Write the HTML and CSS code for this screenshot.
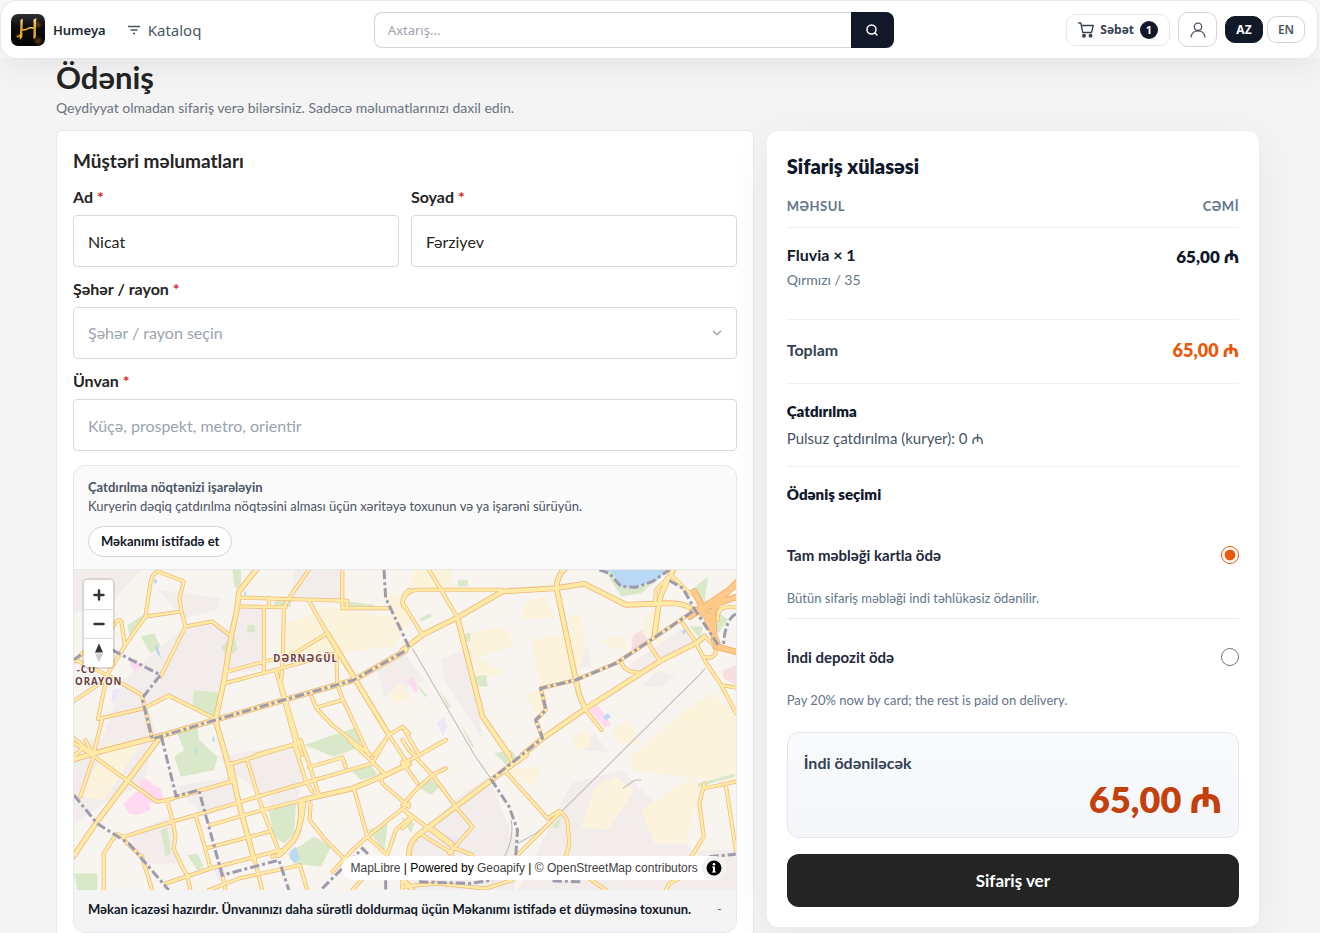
FILE: index.html
```html
<!DOCTYPE html>
<html lang="az">
<head>
<meta charset="utf-8">
<meta name="viewport" content="width=device-width, initial-scale=1">
<title>Ödəniş – Humeya</title>
<link rel="stylesheet" href="styles.css">
</head>
<body>
<div class="topbar">
  <header class="header">
    <div class="header-start">
      <a class="brand" href="#">
        <svg class="brand-logo" viewBox="0 0 34 34" aria-hidden="true">
          <defs>
            <linearGradient id="gold" x1="0" y1="0" x2="0" y2="1"><stop offset="0" stop-color="#fbe27a"/><stop offset=".5" stop-color="#d99a1c"/><stop offset="1" stop-color="#f8c53a"/></linearGradient>
            <linearGradient id="night" x1="0" y1="0" x2="0" y2="1"><stop offset="0" stop-color="#2e3036"/><stop offset=".4" stop-color="#0d0d10"/><stop offset="1" stop-color="#050505"/></linearGradient>
            <radialGradient id="ember"><stop offset="0" stop-color="#a05c10" stop-opacity=".6"/><stop offset="1" stop-color="#a05c10" stop-opacity="0"/></radialGradient>
          </defs>
          <rect y="1" width="34" height="32" rx="7" fill="url(#night)"/>
          <circle cx="27" cy="28" r="5" fill="url(#ember)"/>
          <circle cx="27" cy="12" r="4" fill="url(#ember)"/>
          <circle cx="7" cy="23" r="3" fill="url(#ember)"/>
          <path d="M9.500 7l2.300-1.500-.5 18.500-2.500 3z" fill="url(#gold)"/>
          <path d="M22.500 6.500l2.800-1.500-.5 19-2.300 2.500z" fill="url(#gold)"/>
          <path d="M5.500 23.500l3.500-2v2L6.500 24.500z" fill="#d8961c"/>
          <path d="M10.500 16.500q4 1 6.500-1 3-1.500 6.500 0" fill="none" stroke="url(#gold)" stroke-width="1.500"/>
        </svg>
        <span class="brand-name">Humeya</span>
      </a>
      <a class="catalog-link" href="#">
        <svg width="12" height="10" viewBox="0 0 12 10" fill="none" stroke="currentColor" stroke-width="1.300" aria-hidden="true"><path d="M0 1.500h12M2.500 5h7M5 8.500h2"/></svg>
        Kataloq
      </a>
    </div>
    <form class="search" role="search">
      <input class="search-input" type="search" placeholder="Axtarış..." aria-label="Axtarış">
      <button class="search-button" type="button" aria-label="Axtar">
        <svg width="14" height="14" viewBox="0 0 14 14" fill="none" stroke="currentColor" stroke-width="1.500" stroke-linecap="round" aria-hidden="true"><circle cx="6.500" cy="6.500" r="4.500"/><path d="M10 10l2 2"/></svg>
      </button>
    </form>
    <nav class="header-end" aria-label="Hesab">
      <a class="cart" href="#">
        <svg width="16" height="16" viewBox="0 0 16 16" fill="none" stroke="currentColor" stroke-width="1.300" stroke-linecap="round" stroke-linejoin="round" aria-hidden="true"><path d="M.7 1h2.100l2 9.500h8.700L15.300 3.500H3.400"/><circle cx="6" cy="13.800" r="1.300" fill="currentColor"/><circle cx="12.500" cy="13.800" r="1.300" fill="currentColor"/></svg>
        Səbət
        <span class="cart-count">1</span>
      </a>
      <a class="account" href="#" aria-label="Profil">
        <svg width="16" height="16" viewBox="0 0 16 16" fill="none" stroke="currentColor" stroke-width="1.300" stroke-linecap="round" aria-hidden="true"><circle cx="8" cy="4.800" r="3.700"/><path d="M1 14.800c.8-4 3.500-6 7-6s6.200 2 7 6"/></svg>
      </a>
      <div class="languages">
        <button class="language language-active" type="button">AZ</button>
        <button class="language" type="button">EN</button>
      </div>
    </nav>
  </header>
</div>

<main class="page">
  <h1 class="page-title">Ödəniş</h1>
  <p class="page-lead">Qeydiyyat olmadan sifariş verə bilərsiniz. Sadəcə məlumatlarınızı daxil edin.</p>

  <form class="checkout">
    <section class="panel">
      <h2 class="panel-title">Müştəri məlumatları</h2>
      <div class="fields">
        <div class="field">
          <label class="label" for="first-name">Ad <span class="required">*</span></label>
          <input class="control" id="first-name" type="text" value="Nicat">
        </div>
        <div class="field">
          <label class="label" for="last-name">Soyad <span class="required">*</span></label>
          <input class="control" id="last-name" type="text" value="Fərziyev">
        </div>
        <div class="field field-wide">
          <label class="label" for="city">Şəhər / rayon <span class="required">*</span></label>
          <div class="select-wrap">
            <select class="control control-empty" id="city"><option>Şəhər / rayon seçin</option></select>
            <svg class="select-arrow" width="10" height="6" viewBox="0 0 10 6" fill="none" stroke="currentColor" stroke-width="1.300" aria-hidden="true"><path d="M1 .8l4 4 4-4"/></svg>
          </div>
        </div>
        <div class="field field-wide">
          <label class="label" for="address">Ünvan <span class="required">*</span></label>
          <input class="control" id="address" type="text" placeholder="Küçə, prospekt, metro, orientir">
        </div>
      </div>

      <div class="location">
        <div class="location-head">
          <p class="location-title">Çatdırılma nöqtənizi işarələyin</p>
          <p class="location-text">Kuryerin dəqiq çatdırılma nöqtəsini alması üçün xəritəyə toxunun və ya işarəni sürüyün.</p>
          <button class="locate-button" type="button">Məkanımı istifadə et</button>
        </div>
        <div class="map">
          <svg class="map-canvas" viewBox="0 0 1983 960" preserveAspectRatio="xMidYMid slice" role="img" aria-label="Xəritə">
            <defs>
              <g id="roads-minor">
                <g transform="translate(-6 -15)">
                  <path d="M105 330L160 240 220 155 235 55Q240 25 258 20L335 50 322 100 328 140 340 185 265 335M220 155L328 140M340 185L420 170 478 215M120 190Q140 155 148 170L158 240M0 295L35 262M0 280L105 330 210 390M0 412L100 345M78 462L215 430 290 392 430 462M210 392L240 520M78 462L105 330M65 565L90 465M500 98L825 108M505 125L640 127M590 98V125M710 15L650 100 635 130 632 270 626 360M575 127V325M810 15V130L945 130M825 108V130M710 108L765 205M465 320L575 290 660 270 765 205M458 355L620 312 800 262M612 320L635 405 680 570M628 360L645 420 690 570M792 262L795 360 810 400 890 570M718 395L732 430 780 480 895 570M732 428L810 405M905 570L950 510 990 485 1010 505M950 510L1002 590M550 570L675 535M0 515L60 565M5 575L35 545M1010 75Q985 95 992 125"/>
                </g>
                <g transform="translate(984 -15)">
                  <path d="M80 15L165 158M60 210L0 112Q10 75 50 75L300 75M420 520L400 465 430 435 415 370 520 345 640 295 760 215 870 140M805 30L760 75 757 120M810 35L850 75 880 95M740 240L770 285M655 290Q665 322 705 322M840 175L875 225M880 235L905 285 955 360 1000 445M955 360L1000 368M0 485L50 570 130 525M905 215Q940 240 940 262 930 285 905 275M545 430L597 495"/>
                </g>
                <g transform="translate(-6 510)">
                  <path d="M0 5L65 48 25 170M65 48L170 125 255 185 285 180 475 125M65 48L40 0M285 180L302 245 310 290 305 325 330 380 345 405 355 450M155 290L300 245 475 195 555 170 700 128 900 70M165 310Q145 275 130 285L95 340 95 450M165 310L210 350 240 450M370 225L395 310 415 385M415 255L570 210 690 180M400 325L590 275M280 430L415 385 625 330M410 450L500 415 683 375 705 450M475 72L680 10M525 60L560 175 575 220 625 345M665 10L700 120 720 155M685 0L712 75 740 165 690 180M710 82L810 52 820 80M845 145L885 290 945 345M715 190L712 240 760 300 820 360 860 400M830 0L900 65 940 105M925 105L930 130 1010 200M1010 190L885 290 840 330 780 395M945 345L970 270 1010 235M620 345Q690 300 695 190M940 0L900 70M840 450L885 400 950 380M990 400V450M545 350L570 450M450 400L460 450M600 350L630 340"/>
                </g>
                <g transform="translate(984 510)">
                  <path d="M285 0L330 65M310 95L435 235 470 212Q495 230 495 250L500 310 490 350M475 215L345 345M0 195L40 150 90 105 130 85M0 0L20 30 90 105 160 200 210 260 140 340M0 65L45 130M0 72L60 40 130 0M0 205L150 320 210 345M60 285L150 340M90 265L150 310M0 440L100 430 250 445 330 420M0 205L30 235 0 265M905 130L905 145 1000 125M905 130L890 190 903 290 865 350M970 140L1000 335M790 450L800 430 830 415M560 415L610 450"/>
                </g>
              </g>
              <g id="roads-major">
                <g transform="translate(-6 -15)">
                  <path d="M552 15L500 80 495 130 475 225 455 350 430 465 460 570 480 650M0 585L65 565 240 520 430 465 635 405 845 345 1000 257M765 205L850 345 950 510"/>
                </g>
                <g transform="translate(984 -15)">
                  <path d="M0 257L60 210 165 158 300 80 460 70 545 57 670 120 800 115Q850 115 870 135M165 158L240 455 320 570M490 10Q465 25 462 70L520 345 530 390 548 430M360 570L420 520 550 430 770 290 885 232 905 215M812 15L795 45 775 90 765 140 755 215"/>
                </g>
                <g transform="translate(-6 510)">
                  <path d="M475 72L500 190 545 355M258 0L75 245 0 355M690 180L840 145 940 105 1010 72M685 185Q690 270 660 305L620 345"/>
                </g>
                <g transform="translate(984 510)">
                  <path d="M370 45L300 95 160 200 60 275Q20 300 20 340L5 420 30 450"/>
                </g>
              </g>
              <g id="motorways" transform="translate(984 -15)">
                <path d="M862 155L910 122 1000 62M875 80L905 140 945 240M935 230L930 140 960 95 1005 50M940 245L1005 262M890 130Q900 160 925 150M870 140L1005 95"/>
              </g>
            </defs>
            <rect class="land" width="1983" height="960"/>
            <g class="built">
              <path d="M0 0H200L120 90 0 130zM250 60L440 85 430 120 330 145zM150 330L330 170 415 160 470 200 425 440 290 375 220 410 250 500 75 530zM500 115H570V300L460 310zM660 0L800 0V85L650 90zM0 510L240 500 210 640 90 700 0 760zM430 560L670 520 690 630 560 670 480 610zM300 650L470 620 490 700 390 740zM160 790L290 740 310 880 220 880zM560 700L680 620 670 720zM1100 265L1190 235 1220 480 1225 510 1110 330zM1495 240L1540 230 1550 290 1500 295zM1660 290L1830 170 1860 210 1700 310zM1700 350L1750 300 1800 320 1760 350zM1140 690L1240 620 1330 830 1320 960H1010L1000 840zM1490 640L1640 600 1740 700 1850 840H1983V960H1330zM910 300L990 250 1050 330 930 380zM1520 540L1560 490 1600 545z"/>
            </g>
            <g class="farm">
              <path d="M760 110L1000 150 960 230 780 250 700 270 630 260 640 160zM1020 0H1130V60L1000 50zM1350 100L1410 80 1440 145 1340 145zM1180 190L1290 170 1320 230 1210 260 1290 310 1210 330zM1370 210L1490 190 1480 140 1520 135 1530 250 1490 340 1400 350zM1580 210L1640 195 1660 240 1600 230zM1350 370L1420 360 1400 450 1380 420zM1670 560L1830 420 1910 370 1983 430V640L1670 600zM1490 500L1540 480 1550 530 1510 540zM1610 480L1660 450 1700 520 1640 520zM1560 650L1620 620 1680 660 1600 780 1520 770zM1700 720L1850 620 1880 650 1830 820 1740 820zM100 520L200 520 90 690 20 680zM920 50L1000 100V180L950 140zM1240 600L1400 590 1370 650 1310 610zM940 370L980 340 1010 380 960 400zM1720 120L1760 130V220L1700 200z"/>
            </g>
            <g class="park">
              <path d="M475 0H500V60L480 50zM360 360L440 370 425 440 355 420zM310 490L370 475 375 510 430 560 420 600 320 620 300 560 330 540zM690 525L850 470 860 530 780 560zM580 710L665 700 660 790 630 820 600 800zM640 850L720 800 770 830 740 890 660 880zM0 910H70V960H10zM200 200L240 190 260 230 230 250zM520 165h22v22h-24zM600 95L650 90V110L600 115zM820 95L900 105V115H820zM1035 145L1070 130V142L1040 155zM1150 30h30v20h-30zM1200 320L1235 315 1240 350 1205 350zM1175 190h12v25h-14zM1020 335l40 42-8 4zM1095 360l35 50-8 5zM1150 445l50 85-8 2zM1590 0H1780L1700 70 1640 80zM1850 60L1900 20 1890 90 1960 150 1930 190zM1845 170h40l-10 35zM1260 550L1310 540 1340 580 1300 590zM1030 650L1070 625 1095 650 1070 675zM880 780L940 760 930 840zM160 165L215 130 170 210zM440 230l40-30 10 40-30 20zM980 740l40 20-10 30zM1430 770l30-30-10 35zM1870 640l110-30v10l-110 30zM830 600l60-15 20 30-50 15zM260 780l20-10 10 80-15 10zM340 855l30-5 20 40-20 10z"/>
            </g>
            <g class="retail"><path d="M165 275l20-10 15 25-20 15zM1545 420l25-15 40 60-20 8zM1000 330l15-8 18 40-12 6zM148 702L185 665 200 665 195 625 260 655 268 690 225 700 230 720 190 735 165 730zM200 635l10-12 25 15-10 15z"/></g>
            <g class="school"><path d="M1088 460l20-20 10 30-12 30zM1100 790l60 15-20 25-40-15zM115 360l22-5-10 38-14 8zM420 900l25-10 10 30-20 10z"/></g>
            <g class="clinic"><path d="M1675 195l25-15 20 30-50 30zM1945 300l40-15v60l-40-20z"/></g>
            <g class="water">
              <path d="M1600 0H1770Q1750 45 1710 42 1650 65 1630 40 1625 15 1600 0zM245 220l8 15 8 30-12-15-6-15zM650 840l15-10 12 35-15 15-15-15zM1585 440l15-10 8 10-15 12zM1820 185l10-8 5 8-8 8zM240 28h8v12h-8zM510 65h6v12h-6zM415 500h6v15h-6zM362 535h6v15h-6z"/>
            </g>
            <path class="rail" d="M1014 235L1200 555 1252 630M1892 295L1874 315 1450 735 1384 790 1329 820M1310 750Q1320 800 1290 860M1645 655l35-25h20"/>
            <use class="road-casing road-minor" href="#roads-minor"/>
            <use class="road-casing road-major" href="#roads-major"/>
            <use class="road-fill road-minor" href="#roads-minor"/>
            <use class="road-fill road-major" href="#roads-major"/>
            <use class="motorway-casing" href="#motorways"/>
            <use class="motorway-fill" href="#motorways"/>
            <path class="road-casing" d="M1983 112H1955Q1925 115 1930 150"/>
            <path class="road-fill" d="M1983 112H1955Q1925 115 1930 150"/>
            <path class="border-line" d="M0 270L20 255M114 240L259 315 204 385 234 505M240 505L424 450 629 390 839 330 994 242M262 500L306 678 374 660 444 915 614 870 644 960M0 675L69 760 164 820 284 960M929 0L934 85 996 215 1004 232M744 955L864 835 885 855M934 930V960M1574 0L1604 10 1639 50 1684 52 1734 35 1784 0M1784 32L1824 55 1864 125 1930 225M1983 132Q1950 150 1946 230M1854 125L1744 200 1624 280 1504 330 1399 355 1414 420 1384 450 1404 505 1250 628 1304 710 1329 780 1324 855M1034 935L1184 940 1254 930M1434 932L1524 935M1904 860L1983 852"/>
            <g class="place-label">
              <text x="597" y="276" letter-spacing="3">DƏRNƏGÜL</text>
              <text x="8" y="309" letter-spacing="3">-CU</text>
              <text x="3" y="344" letter-spacing="3">ORAYON</text>
            </g>
          </svg>
          <div class="map-controls">
            <button class="map-control" type="button" aria-label="Yaxınlaşdır"><svg width="12" height="12" viewBox="0 0 12 12" stroke="#333" stroke-width="2.500" stroke-linecap="round" aria-hidden="true"><path d="M6 1.500v9M1.500 6h9"/></svg></button>
            <button class="map-control" type="button" aria-label="Uzaqlaşdır"><svg width="12" height="12" viewBox="0 0 12 12" stroke="#333" stroke-width="2.500" stroke-linecap="round" aria-hidden="true"><path d="M1.500 6h9"/></svg></button>
            <button class="map-control" type="button" aria-label="Şimala yönəlt"><svg width="10" height="20" viewBox="0 0 10 20" aria-hidden="true"><path d="M1 9.500l4-9 4 9z" fill="#333"/><path d="M1 10.500l4 9 4-9z" fill="#ccc"/></svg></button>
          </div>
          <div class="attribution">
            <span><a href="#">MapLibre</a> | Powered by <a href="#">Geoapify</a> | <a href="#">© OpenStreetMap contributors</a></span>
            <button class="attribution-toggle" type="button" aria-label="Xəritə haqqında"><svg width="16" height="16" viewBox="0 0 16 16" aria-hidden="true"><circle cx="8" cy="8" r="7.500"/><path d="M6 6.500h3v5h1v1H6v-1h1v-4H6z" fill="#fff"/><circle cx="8" cy="4.300" r="1.300" fill="#fff"/></svg></button>
          </div>
        </div>
        <div class="location-foot">
          <span class="location-status">Məkan icazəsi hazırdır. Ünvanınızı daha sürətli doldurmaq üçün Məkanımı istifadə et düyməsinə toxunun.</span>
          <span class="location-value">-</span>
        </div>
      </div>
    </section>

    <aside class="summary">
      <h2 class="summary-title">Sifariş xülasəsi</h2>
      <table class="order">
        <thead><tr><th scope="col">MƏHSUL</th><th scope="col">CƏMİ</th></tr></thead>
        <tbody><tr>
          <td><span class="order-name">Fluvia × 1</span><span class="order-variant">Qırmızı / 35</span></td>
          <td class="order-price">65,00 ₼</td>
        </tr></tbody>
        <tfoot><tr><th class="total-label" scope="row">Toplam</th><td class="total-price">65,00 ₼</td></tr></tfoot>
      </table>
      <section class="delivery">
        <h3 class="summary-heading">Çatdırılma</h3>
        <p class="delivery-text">Pulsuz çatdırılma (kuryer): 0 ₼</p>
      </section>
      <fieldset class="payment">
        <legend class="summary-heading">Ödəniş seçimi</legend>
        <div class="option">
          <div class="option-row">
            <label class="option-label" for="pay-full">Tam məbləği kartla ödə</label>
            <input class="radio" id="pay-full" type="radio" name="payment" checked>
          </div>
          <p class="option-text">Bütün sifariş məbləği indi təhlükəsiz ödənilir.</p>
        </div>
        <div class="option">
          <div class="option-row">
            <label class="option-label" for="pay-deposit">İndi depozit ödə</label>
            <input class="radio" id="pay-deposit" type="radio" name="payment">
          </div>
          <p class="option-text">Pay 20% now by card; the rest is paid on delivery.</p>
        </div>
      </fieldset>
      <div class="due">
        <span class="due-label">İndi ödəniləcək</span>
        <strong class="due-price">65,00 ₼</strong>
      </div>
      <button class="submit" type="button">Sifariş ver</button>
    </aside>
  </form>
</main>
</body>
</html>
```

FILE: styles.css
```css
*, *::before, *::after { box-sizing: border-box; }

body {
  margin: 0;
  background: #f4f4f4;
  color: #242424;
  font-family: Lato, "Noto Sans", sans-serif;
  font-size: 16px;
  line-height: 24px;
}

h1, h2, h3, p { margin: 0; }
a { color: inherit; text-decoration: none; }
button, input, select { font: inherit; color: inherit; }
button { cursor: pointer; }
svg { flex: none; }

/* Header */
.topbar {
  position: sticky;
  top: 0;
  z-index: 5;
  padding-right: 2px;
  background: #f8f9fb;
  font-family: "Noto Sans", sans-serif;
}
.header {
  display: flex;
  align-items: center;
  justify-content: space-between;
  gap: 16px;
  height: 59px;
  padding: 0 12px 0 10px;
  background: #fff;
  border: 1px solid #e5e7eb;
  border-radius: 16px;
  box-shadow: 0 10px 30px rgba(15, 23, 42, 0.06);
}
.header-start, .header-end, .brand, .catalog-link, .cart, .languages {
  display: flex;
  align-items: center;
}
.header-start { gap: 22px; }
.brand { gap: 8px; }
.brand-logo { width: 34px; height: 34px; }
.brand-name { color: #1f2937; font-size: 13px; font-weight: 600; }
.catalog-link { gap: 8px; color: #4b5563; font-size: 15px; }
.search { display: flex; flex: 0 1 520px; height: 36px; }
.search-input {
  flex: 1;
  min-width: 0;
  padding: 0 13px;
  border: 1px solid #d1d5db;
  border-right: 0;
  border-radius: 8px 0 0 8px;
  background: #fff;
  font-size: 13px;
}
.search-input::placeholder { color: #9ca3af; }
.search-button {
  display: grid;
  place-items: center;
  width: 43px;
  border: 0;
  border-radius: 0 8px 8px 0;
  background: #111827;
  color: #fff;
}
.header-end { gap: 8px; }
.cart {
  gap: 6px;
  height: 32px;
  padding: 0 11px;
  border: 1px solid #e5e7eb;
  border-radius: 10px;
  color: #374151;
  font-size: 12px;
  font-weight: 700;
}
.cart-count {
  width: 18px;
  border-radius: 9px;
  background: #111827;
  color: #fff;
  font-size: 11px;
  font-weight: 700;
  line-height: 18px;
  text-align: center;
}
.account {
  display: grid;
  place-items: center;
  width: 39px;
  height: 35px;
  border: 1px solid #d1d5db;
  border-radius: 10px;
  color: #4b5563;
}
.languages { gap: 4px; }
.language {
  width: 38px;
  height: 27px;
  padding: 0;
  border: 1px solid #d1d5db;
  border-radius: 10px;
  background: #fff;
  color: #4b5563;
  font-size: 12px;
  font-weight: 600;
}
.language-active { border-color: #111827; background: #111827; color: #fff; font-weight: 700; }

/* Page */
.page { padding: 0 60px 0 56px; }
.page-title { font-size: 31px; font-weight: 700; line-height: 36px; }
.page-lead { margin-top: 3px; color: #6b7280; font-size: 14px; line-height: 20px; }
.checkout {
  display: grid;
  grid-template-columns: minmax(0, 24fr) minmax(0, 17fr);
  align-items: start;
  gap: 12px;
  margin-top: 12px;
}

/* Customer details */
.panel {
  padding: 16px;
  background: #fff;
  border: 1px solid #e5e7eb;
  border-radius: 6px;
}
.panel-title { margin-bottom: 10px; font-size: 19px; font-weight: 700; line-height: 28px; }
.fields { display: grid; grid-template-columns: 1fr 1fr; gap: 10px 12px; }
.field { display: grid; gap: 6px; }
.field-wide { grid-column: 1 / -1; }
.label { font-weight: 700; }
.required { color: #dc2626; font-weight: 700; }
.control {
  width: 100%;
  height: 52px;
  padding: 0 14px;
  border: 1px solid #d9d9d9;
  border-radius: 4px;
  background: #fff;
  appearance: none;
}
.control::placeholder, .control-empty { color: #9ca3af; opacity: 1; }
.select-wrap { position: relative; display: grid; }
.select-arrow { position: absolute; top: 23px; right: 15px; color: #9ca3af; pointer-events: none; }

.location {
  margin-top: 14px;
  overflow: hidden;
  border: 1px solid #e5e7eb;
  border-radius: 12px;
  background: #fafafa;
  font-size: 13px;
  line-height: 19px;
}
.location-head { padding: 12px 14px; border-bottom: 1px solid #e5e7eb; color: #4b5563; }
.location-title { font-weight: 700; }
.locate-button {
  height: 31px;
  margin-top: 10px;
  padding: 0 12px;
  border: 1px solid #d1d5db;
  border-radius: 16px;
  background: #fff;
  color: #111827;
  font-weight: 700;
}
.map { position: relative; height: 320px; overflow: hidden; }
.map-canvas { display: block; width: 100%; height: 100%; }
.land { fill: #f8f4f0; }
.built { fill: #f2ecea; }
.farm { fill: #fcf3dd; }
.park { fill: #d8e8c8; }
.retail { fill: #ffd9ef; }
.school { fill: #eee6fb; }
.clinic { fill: #f5dfe0; }
.water { fill: #b9d8f4; }
.rail { fill: none; stroke: #bdbab8; stroke-width: 3; }
.road-casing, .road-fill, .motorway-casing, .motorway-fill { fill: none; stroke-linejoin: round; stroke-linecap: round; }
.road-casing { stroke: #edb87a; stroke-width: 12; }
.road-fill { stroke: #ffeaa6; stroke-width: 8; }
.road-casing.road-major { stroke-width: 17; }
.road-fill.road-major { stroke-width: 12; }
.motorway-casing { stroke: #f0a860; stroke-width: 19; }
.motorway-fill { stroke: #ffc98a; stroke-width: 15; }
.border-line { fill: none; stroke: #9e9bad; stroke-width: 9; stroke-dasharray: 28 9 9 9; }
.place-label {
  fill: #6b3f44;
  stroke: #fff;
  stroke-opacity: 0.8;
  stroke-width: 5;
  paint-order: stroke;
  font-family: "Noto Sans", sans-serif;
  font-size: 29px;
  font-weight: 700;
}
.map-controls {
  position: absolute;
  top: 10px;
  left: 10px;
  overflow: hidden;
  border-radius: 4px;
  background: #fff;
  box-shadow: 0 0 0 2px rgba(0, 0, 0, 0.1);
}
.map-control {
  display: grid;
  place-items: center;
  width: 29px;
  height: 29px;
  padding: 0;
  border: 0;
  background: #fff;
}
.map-control + .map-control { border-top: 1px solid #ddd; }
.attribution {
  position: absolute;
  right: 10px;
  bottom: 10px;
  display: flex;
  align-items: center;
  gap: 4px;
  padding-left: 8px;
  border-radius: 12px;
  background: #fff;
  color: #000;
  font-family: "Liberation Sans", Arial, sans-serif;
  font-size: 12px;
  line-height: 24px;
}
.attribution a { color: #404040; }
.attribution-toggle {
  display: grid;
  place-items: center;
  width: 24px;
  height: 24px;
  padding: 0;
  border: 0;
  border-radius: 12px;
  background: #f2f2f2;
}
.location-foot {
  display: flex;
  justify-content: space-between;
  gap: 12px;
  padding: 10px 14px 13px;
  background: #f4f4f5;
}
.location-status { color: #111827; font-weight: 700; }
.location-value { color: #6b7280; }

/* Order summary */
.summary {
  padding: 20px;
  background: #fff;
  border: 1px solid #eceef1;
  border-radius: 12px;
  box-shadow: 0 10px 40px rgba(0, 0, 0, 0.06);
  color: #0f172a;
}
.summary-title { font-size: 20px; font-weight: 800; line-height: 30px; }
.order { width: 100%; border-collapse: collapse; }
.order th, .order td { padding: 0; text-align: left; vertical-align: top; }
.order th:last-child, .order td:last-child { text-align: right; }
.order tr { border-bottom: 1px solid #eef0f3; }
.order thead th {
  padding: 14px 0 10px;
  color: #64748b;
  font-size: 13px;
  font-weight: 700;
  line-height: 22px;
  letter-spacing: 0.5px;
}
.order tbody td { padding: 15px 0 26px; }
.order-name, .order-variant { display: block; }
.order-name { font-weight: 700; }
.order-variant { color: #64748b; font-size: 14px; line-height: 26px; }
.order .order-price { font-size: 17px; font-weight: 800; line-height: 28px; }
.order .order-name, .order .order-variant { white-space: nowrap; }
.order tfoot th, .order tfoot td { padding: 16px 0 19px; line-height: 28px; }
.total-label { color: #334155; font-size: 16px; font-weight: 700; }
.total-price { color: #ea580c; font-size: 18px; font-weight: 800; }
.delivery { padding: 15px 0; border-bottom: 1px solid #eef0f3; }
.summary-heading { padding: 0; font-size: 15px; font-weight: 800; line-height: 24px; }
.delivery-text { margin-top: 3px; color: #475569; font-size: 15px; line-height: 25px; }
.payment { margin: 0; padding: 15px 0 0; border: 0; }
.payment legend { float: left; width: 100%; margin-bottom: 24px; }
.option { clear: both; }
.option + .option { border-top: 1px solid #e8eaef; }
.option-row {
  display: flex;
  align-items: center;
  justify-content: space-between;
  padding: 12px 0 14px;
  line-height: 26px;
}
.option + .option .option-row { padding-top: 25px; }
.option-label { font-size: 15px; font-weight: 700; color: #1e293b; }
.radio { width: 18px; height: 18px; margin: 0; accent-color: #ea580c; }
.option-text { padding: 6px 0 10px; color: #64748b; font-size: 13px; line-height: 20px; }
.due {
  display: grid;
  margin-top: 12px;
  padding: 16px;
  border: 1px solid #e5e7f0;
  border-radius: 12px;
  background: linear-gradient(#f9fafc, #f4f6fa);
}
.due-label { color: #334155; font-size: 16px; font-weight: 700; line-height: 28px; }
.due-price { color: #c2410c; font-size: 36px; font-weight: 800; line-height: 44px; text-align: right; }
.submit {
  width: 100%;
  height: 53px;
  margin-top: 16px;
  border: 0;
  border-radius: 12px;
  background: #242424;
  color: #fff;
  font-size: 17px;
  font-weight: 700;
}

@media (max-width: 900px) {
  .checkout { grid-template-columns: minmax(0, 1fr); }
  .page { padding: 0 16px; }
}
```
